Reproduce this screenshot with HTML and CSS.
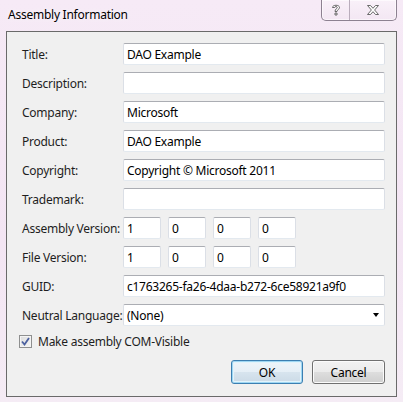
FILE: index.html
```html
<!DOCTYPE html>
<html>
<head>
<meta charset="utf-8">
<link rel="stylesheet" href="styles.css">
</head>
<body>
<div class="window">
  <div class="titlebar">
    <span class="title">Assembly Information</span>
    <div class="caption-btns">
      <div class="cap help">
        <svg width="12" height="14" viewBox="0 0 12 14"><path d="M2.5 4.5 C2.5 1.5 9.5 1.5 9.5 4.5 C9.5 6.5 7 6.5 7 8.5 L5 8.5 C5 5.8 7.3 5.8 7.3 4.5 C7.3 3.2 4.7 3.2 4.7 4.5 Z M5 10 L7 10 L7 12 L5 12 Z" fill="#fff" stroke="#5a5a5a" stroke-width="0.9"/></svg>
      </div>
      <div class="cap close">
        <svg width="14" height="12" viewBox="0 0 14 12"><path d="M1.5 1.5 L4.5 1.5 L7 4.3 L9.5 1.5 L12.5 1.5 L8.6 6 L12.5 10.5 L9.5 10.5 L7 7.7 L4.5 10.5 L1.5 10.5 L5.4 6 Z" fill="#fff" stroke="#5a5a5a" stroke-width="0.9"/></svg>
      </div>
    </div>
  </div>
  <div class="client">
    <div class="rows">
      <div class="row"><label>Title:</label><div class="input wide">DAO Example</div></div>
      <div class="row"><label>Description:</label><div class="input wide"></div></div>
      <div class="row"><label>Company:</label><div class="input wide">Microsoft</div></div>
      <div class="row"><label>Product:</label><div class="input wide">DAO Example</div></div>
      <div class="row"><label>Copyright:</label><div class="input wide">Copyright © Microsoft 2011</div></div>
      <div class="row"><label>Trademark:</label><div class="input wide"></div></div>
      <div class="row"><label>Assembly Version:</label>
        <div class="versions"><div class="input ver">1</div><div class="input ver">0</div><div class="input ver">0</div><div class="input ver">0</div></div>
      </div>
      <div class="row"><label>File Version:</label>
        <div class="versions"><div class="input ver">1</div><div class="input ver">0</div><div class="input ver">0</div><div class="input ver">0</div></div>
      </div>
      <div class="row"><label>GUID:</label><div class="input wide">c1763265-fa26-4daa-b272-6ce58921a9f0</div></div>
      <div class="row"><label>Neutral Language:</label><div class="input wide select"><span>(None)</span><span class="arrow"></span></div></div>
    </div>
    <div class="check-row">
      <span class="checkbox"><svg width="9" height="9" viewBox="0 0 9 9"><path d="M1 4.5 L3.5 7.5 L8 1" fill="none" stroke="#4c61a0" stroke-width="1.8"/></svg></span>
      <span>Make assembly COM-Visible</span>
    </div>
    <div class="buttons">
      <button class="btn default">OK</button>
      <button class="btn">Cancel</button>
    </div>
  </div>
</div>
</body>
</html>
```
FILE: styles.css
```css
html, body {
  margin: 0;
  padding: 0;
}
body {
  width: 403px;
  height: 402px;
  background: linear-gradient(180deg, #f6eaf6 0%, #f3e5f3 60%, #f5ecf5 100%);
  font-family: "Noto Sans", "Open Sans", sans-serif;
  font-size: 12px;
  letter-spacing: -0.25px;
  color: #1e1e1e;
  overflow: hidden;
}
.window {
  display: flex;
  flex-direction: column;
  height: 402px;
}
.titlebar {
  height: 31px;
  display: flex;
  justify-content: space-between;
  align-items: flex-start;
  padding: 0 6px 0 8px;
  box-sizing: border-box;
}
.title {
  margin-top: 7px;
  line-height: 16px;
  color: #000;
  text-shadow: 0 0 6px rgba(255,255,255,0.9);
}
.caption-btns {
  display: flex;
  height: 20px;
  border: 1px solid #8d8191;
  border-top: none;
  border-radius: 0 0 5px 5px;
  background: linear-gradient(180deg, #f9f1f9 0%, #f3e7f3 100%);
  box-shadow: inset 0 0 0 1px rgba(255,255,255,0.6);
}
.cap {
  display: flex;
  align-items: center;
  justify-content: center;
}
.cap.help {
  width: 27px;
  border-right: 1px solid #b9adbc;
}
.cap.close {
  width: 46px;
}
.client {
  margin: 0 6px;
  height: 366px;
  box-sizing: border-box;
  border: 1px solid #6a6a6a;
  background: #f0f0f0;
  padding: 11px 11px 12px 15px;
  display: flex;
  flex-direction: column;
}
.rows {
  display: flex;
  flex-direction: column;
  gap: 7px;
}
.row {
  display: flex;
  align-items: center;
  height: 22px;
}
.row label {
  width: 101px;
  flex: none;
  white-space: nowrap;
}
.input {
  height: 22px;
  box-sizing: border-box;
  background: #fff;
  border: 1px solid #dbdfe6;
  border-top-color: #abadb3;
  border-bottom-color: #e3e9ef;
  border-radius: 2px;
  padding: 0 3px;
  display: flex;
  align-items: center;
  white-space: nowrap;
  color: #000;
}
.input.wide {
  width: 262px;
}
.versions {
  display: flex;
  gap: 7px;
}
.input.ver {
  width: 38px;
}
.select {
  justify-content: space-between;
  padding-right: 5px;
}
.arrow {
  width: 0;
  height: 0;
  border-left: 3.5px solid transparent;
  border-right: 3.5px solid transparent;
  border-top: 4px solid #000;
}
.check-row {
  display: flex;
  align-items: center;
  gap: 6px;
  margin-top: 7px;
  margin-left: -3px;
  height: 16px;
}
.checkbox {
  width: 13px;
  height: 13px;
  box-sizing: border-box;
  border: 1px solid #8e8f8f;
  background: linear-gradient(135deg, #dcdcdc 0%, #f6f6f6 100%);
  box-shadow: inset 0 0 0 1px #f4f4f4;
  display: flex;
  align-items: center;
  justify-content: center;
}
.buttons {
  margin-top: auto;
  display: flex;
  justify-content: flex-end;
  gap: 9px;
}
.btn {
  width: 73px;
  height: 24px;
  font-family: inherit;
  font-size: 12px;
  letter-spacing: inherit;
  color: #000;
  border: 1px solid #707070;
  border-radius: 3px;
  background: linear-gradient(180deg, #f2f2f2 0%, #ebebeb 48%, #dddddd 52%, #cfcfcf 100%);
  box-shadow: inset 0 0 0 1px #fbfbfb;
  padding: 0;
}
.btn.default {
  width: 72px;
  border-color: #3c7fb1;
  box-shadow: inset 0 0 0 1px #9fd7f3, inset 0 0 0 2px #e2f3fb;
  background: linear-gradient(180deg, #eef5fa 0%, #e6eff6 48%, #d7e4ee 52%, #cbdae6 100%);
}
```
